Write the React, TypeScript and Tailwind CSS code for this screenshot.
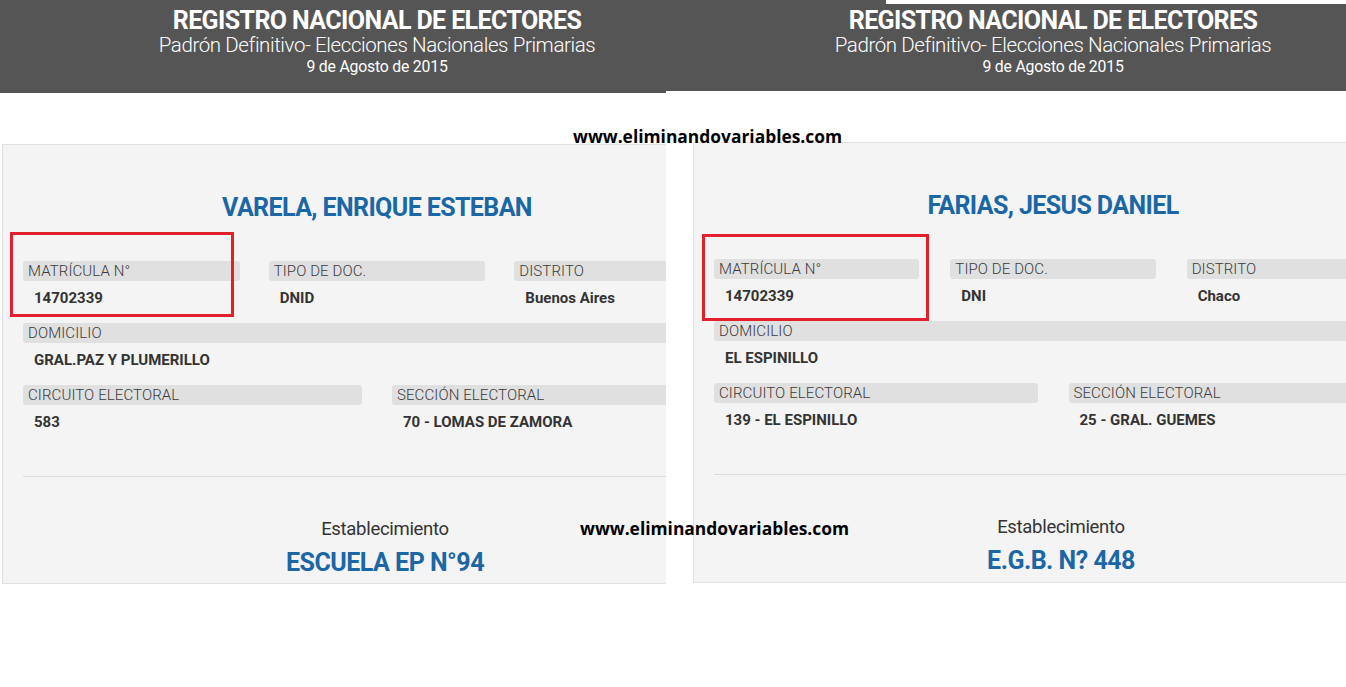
import React from "react"

type Field = { label: string; value: string }

type Voter = {
    name: string
    top: Field[]
    domicilio: string
    bottom: Field[]
    establecimiento: string
}

const font = { fontFamily: "Roboto, 'Liberation Sans', sans-serif" }

const Label: React.FC<{ text: string }> = ({ text }) => (
    <div className="h-[20px] bg-[#e0e0e0] rounded-[3px] pl-[5px] text-[15px] leading-[20px] text-[#3a3a3a] tracking-[0.1px] font-light whitespace-nowrap overflow-hidden">
        {text}
    </div>
)

const Value: React.FC<{ text: string }> = ({ text }) => (
    <div className="h-[32px] pl-[11px] pt-[1px] text-[15px] leading-[32px] font-bold text-[#333] whitespace-nowrap">
        {text}
    </div>
)

const Header: React.FC<{ className: string }> = ({ className }) => (
    <div className={`bg-[#555555] text-white text-center flex flex-col items-center ${className}`}>
        <div className="text-[25px] leading-[26px] font-bold tracking-[-0.6px]">
            REGISTRO NACIONAL DE ELECTORES
        </div>
        <div className="text-[20.5px] leading-[22px] font-light tracking-[-0.4px]">
            Padrón Definitivo- Elecciones Nacionales Primarias
        </div>
        <div className="text-[15.8px] leading-[22px] tracking-[-0.2px]">
            9 de Agosto de 2015
        </div>
    </div>
)

const Card: React.FC<{ voter: Voter; cols3: string; cols2: string; className: string }> = ({
    voter,
    cols3,
    cols2,
    className,
}) => (
    <div className={`bg-[#f4f4f4] border border-[#e2e2e2] px-[20px] pt-[48px] pb-[6px] ${className}`}>
        <h2 className="text-center text-[25px] leading-[30px] font-bold text-[#1b67a5] tracking-[-0.6px]">
            {voter.name}
        </h2>

        <div className={`grid ${cols3} mt-[38px]`}>
            {voter.top.map((f) => (
                <div key={f.label}>
                    <Label text={f.label} />
                    <Value text={f.value} />
                </div>
            ))}
        </div>

        <div className="mt-[10px]">
            <Label text="DOMICILIO" />
            <Value text={voter.domicilio} />
        </div>

        <div className={`grid ${cols2} mt-[10px]`}>
            {voter.bottom.map((f) => (
                <div key={f.label}>
                    <Label text={f.label} />
                    <Value text={f.value} />
                </div>
            ))}
        </div>

        <div className="mt-[39px] border-t border-[#dcdcdc]" />

        {/* Establecimiento */}
        <div className="pl-[16px] text-center">
            <div className="mt-[40px] text-[18.5px] leading-[24px] text-[#333] tracking-[-0.3px]">
                Establecimiento
            </div>
            <div className="mt-[7px] text-[25px] leading-[30px] font-bold text-[#1b67a5] tracking-[-0.5px]">
                {voter.establecimiento}
            </div>
        </div>
    </div>
)

const varela: Voter = {
    name: "VARELA, ENRIQUE ESTEBAN",
    top: [
        { label: "MATRÍCULA N°", value: "14702339" },
        { label: "TIPO DE DOC.", value: "DNID" },
        { label: "DISTRITO", value: "Buenos Aires" },
    ],
    domicilio: "GRAL.PAZ Y PLUMERILLO",
    bottom: [
        { label: "CIRCUITO ELECTORAL", value: "583" },
        { label: "SECCIÓN ELECTORAL", value: "70 - LOMAS DE ZAMORA" },
    ],
    establecimiento: "ESCUELA EP N°94",
}

const farias: Voter = {
    name: "FARIAS, JESUS DANIEL",
    top: [
        { label: "MATRÍCULA N°", value: "14702339" },
        { label: "TIPO DE DOC.", value: "DNI" },
        { label: "DISTRITO", value: "Chaco" },
    ],
    domicilio: "EL ESPINILLO",
    bottom: [
        { label: "CIRCUITO ELECTORAL", value: "139 - EL ESPINILLO" },
        { label: "SECCIÓN ELECTORAL", value: "25 - GRAL. GUEMES" },
    ],
    establecimiento: "E.G.B. N? 448",
}

const Watermark: React.FC<{ className: string }> = ({ className }) => (
    <div
        className={`absolute text-[17.4px] leading-[20px] font-bold text-black whitespace-nowrap ${className}`}
        style={{ fontFamily: "'Open Sans', 'DejaVu Sans', sans-serif" }}
    >
        www.eliminandovariables.com
    </div>
)

export default function App() {
    return (
        <div className="relative w-[1346px] h-[687px] bg-white overflow-hidden flex" style={font}>
            {/* Left capture */}
            <div className="w-[666px] shrink-0 overflow-hidden">
                <div className="w-[754px]">
                    <Header className="h-[93px] pt-[8px]" />
                    <Card
                        voter={varela}
                        cols3="grid-cols-3 gap-x-[29px]"
                        cols2="grid-cols-2 gap-x-[30px]"
                        className="mt-[51px] ml-[2px] w-[750px] h-[440px]"
                    />
                </div>
            </div>

            {/* Right capture */}
            <div className="w-[680px] shrink-0 overflow-hidden">
                <div className="w-[774px]">
                    <div className="flex h-[4px]">
                        <div className="w-[220px] bg-[#555555]" />
                    </div>
                    <Header className="h-[87px] pt-[4px]" />
                    <Card
                        voter={farias}
                        cols3="grid-cols-3 gap-x-[31px]"
                        cols2="grid-cols-2 gap-x-[31px]"
                        className="mt-[51px] ml-[27px] w-[720px] h-[441px]"
                    />
                </div>
            </div>

            {/* Overlays */}
            <div className="absolute left-[10px] top-[232px] w-[224px] h-[85px] border-[3px] border-[#e2202b]" />
            <div className="absolute left-[702px] top-[234px] w-[227px] h-[87px] border-[3px] border-[#e2202b]" />
            <Watermark className="left-[573px] top-[126px]" />
            <Watermark className="left-[580px] top-[518px]" />
        </div>
    )
}
